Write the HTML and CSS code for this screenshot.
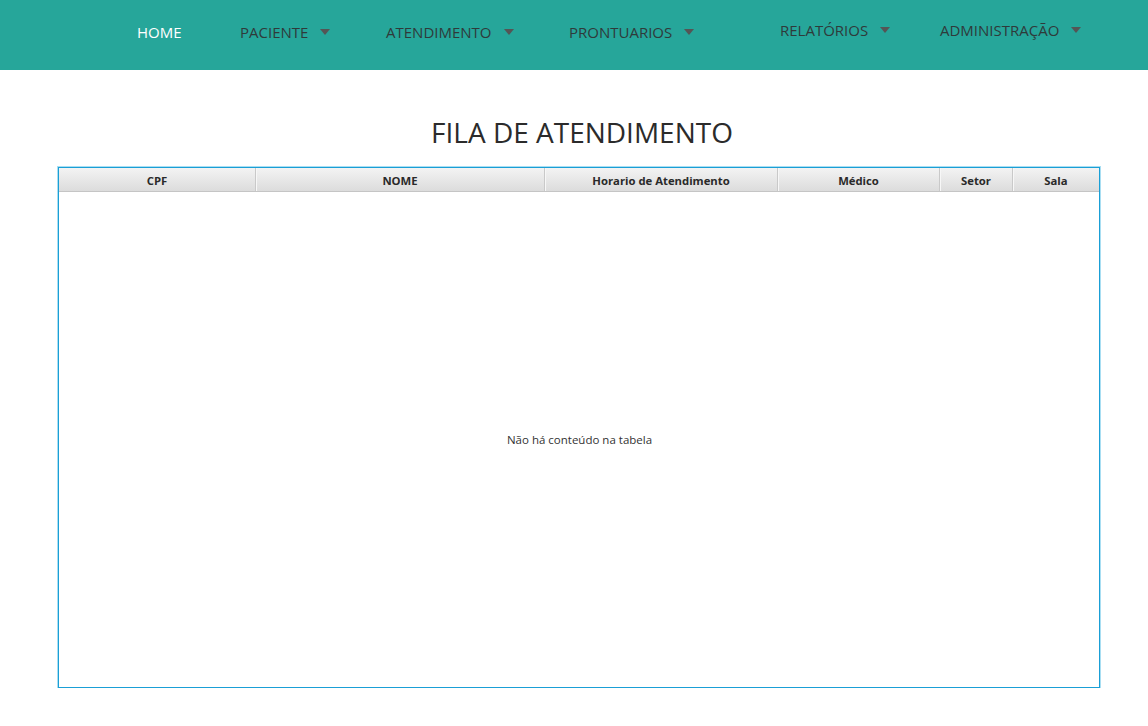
FILE: index.html
```html
<!DOCTYPE html>
<html lang="pt-BR">
<head>
<meta charset="utf-8">
<title>Fila de Atendimento</title>
<link rel="stylesheet" href="styles.css">
</head>
<body>
<header class="topbar">
  <nav class="nav">
    <a class="nav-item nav-home active">HOME</a>
    <a class="nav-item nav-paciente">PACIENTE <span class="caret"></span></a>
    <a class="nav-item nav-atendimento">ATENDIMENTO <span class="caret"></span></a>
    <a class="nav-item nav-prontuarios">PRONTUARIOS <span class="caret"></span></a>
    <a class="nav-item nav-relatorios raised">RELATÓRIOS <span class="caret"></span></a>
    <a class="nav-item nav-admin raised">ADMINISTRAÇÃO <span class="caret"></span></a>
  </nav>
</header>
<main class="content">
  <h1 class="title">FILA DE ATENDIMENTO</h1>
  <div class="table">
    <div class="thead">
      <div class="th">CPF</div>
      <div class="th">NOME</div>
      <div class="th">Horario de Atendimento</div>
      <div class="th">Médico</div>
      <div class="th">Setor</div>
      <div class="th">Sala</div>
    </div>
    <div class="tbody">
      <span class="empty">Não há conteúdo na tabela</span>
    </div>
  </div>
</main>
</body>
</html>
```
FILE: styles.css
```css
* { box-sizing: border-box; }
html, body { margin: 0; padding: 0; background: #fff; }
body { font-family: "Open Sans", "Noto Sans", "Liberation Sans", sans-serif; color: #333; }

.topbar {
  height: 70px;
  background: #26a69a;
}
.nav {
  display: flex;
  align-items: center;
  height: 70px;
  padding-left: 137px;
  padding-bottom: 6px;
}
.nav-item {
  display: flex;
  align-items: center;
  font-size: 15px;
  color: #2f3a3a;
  letter-spacing: 0;
  white-space: nowrap;
  cursor: pointer;
}
.nav-item.active { color: #fff; }
.nav-home { width: 103px; }
.nav-paciente { width: 146px; }
.nav-atendimento { width: 183px; }
.nav-prontuarios { width: 211px; }
.nav-relatorios { width: 160px; }
.raised { margin-top: -4px; }
.caret {
  display: inline-block;
  width: 0; height: 0;
  margin-left: 12px;
  border-left: 5px solid transparent;
  border-right: 5px solid transparent;
  border-top: 6px solid #555;
}

.content {
  padding: 42px 48px 0 58px;
}
.title {
  margin: 0 0 15px 0;
  text-align: center;
  font-weight: 400;
  font-size: 28px;
  line-height: 40px;
  color: #2b2b2b;
  letter-spacing: 0;
  padding-left: 6px;
}
.table {
  width: 1042px;
  height: 521px;
  border: 1px solid #1a9fd6;
  box-shadow: 0 0 0 1px #a9def2;
  display: flex;
  flex-direction: column;
}
.thead {
  display: grid;
  grid-template-columns: 196px 289px 233px 162px 73px 1fr;
  height: 24px;
  background: linear-gradient(#f3f3f3, #dcdcdc);
  border-bottom: 1px solid #c5c5c5;
}
.th {
  display: flex;
  align-items: center;
  justify-content: center;
  font-size: 11.3px;
  font-weight: 700;
  color: #2a2a2a;
  border-left: 1px solid #c9c9c9;
  box-shadow: inset 1px 0 0 #f7f7f7;
  padding-top: 1px;
}
.th:first-child { border-left: none; box-shadow: none; }
.tbody {
  flex: 1;
  display: flex;
  align-items: center;
  justify-content: center;
}
.empty {
  font-size: 11.5px;
  color: #333;
  padding-left: 1px;
}
```
